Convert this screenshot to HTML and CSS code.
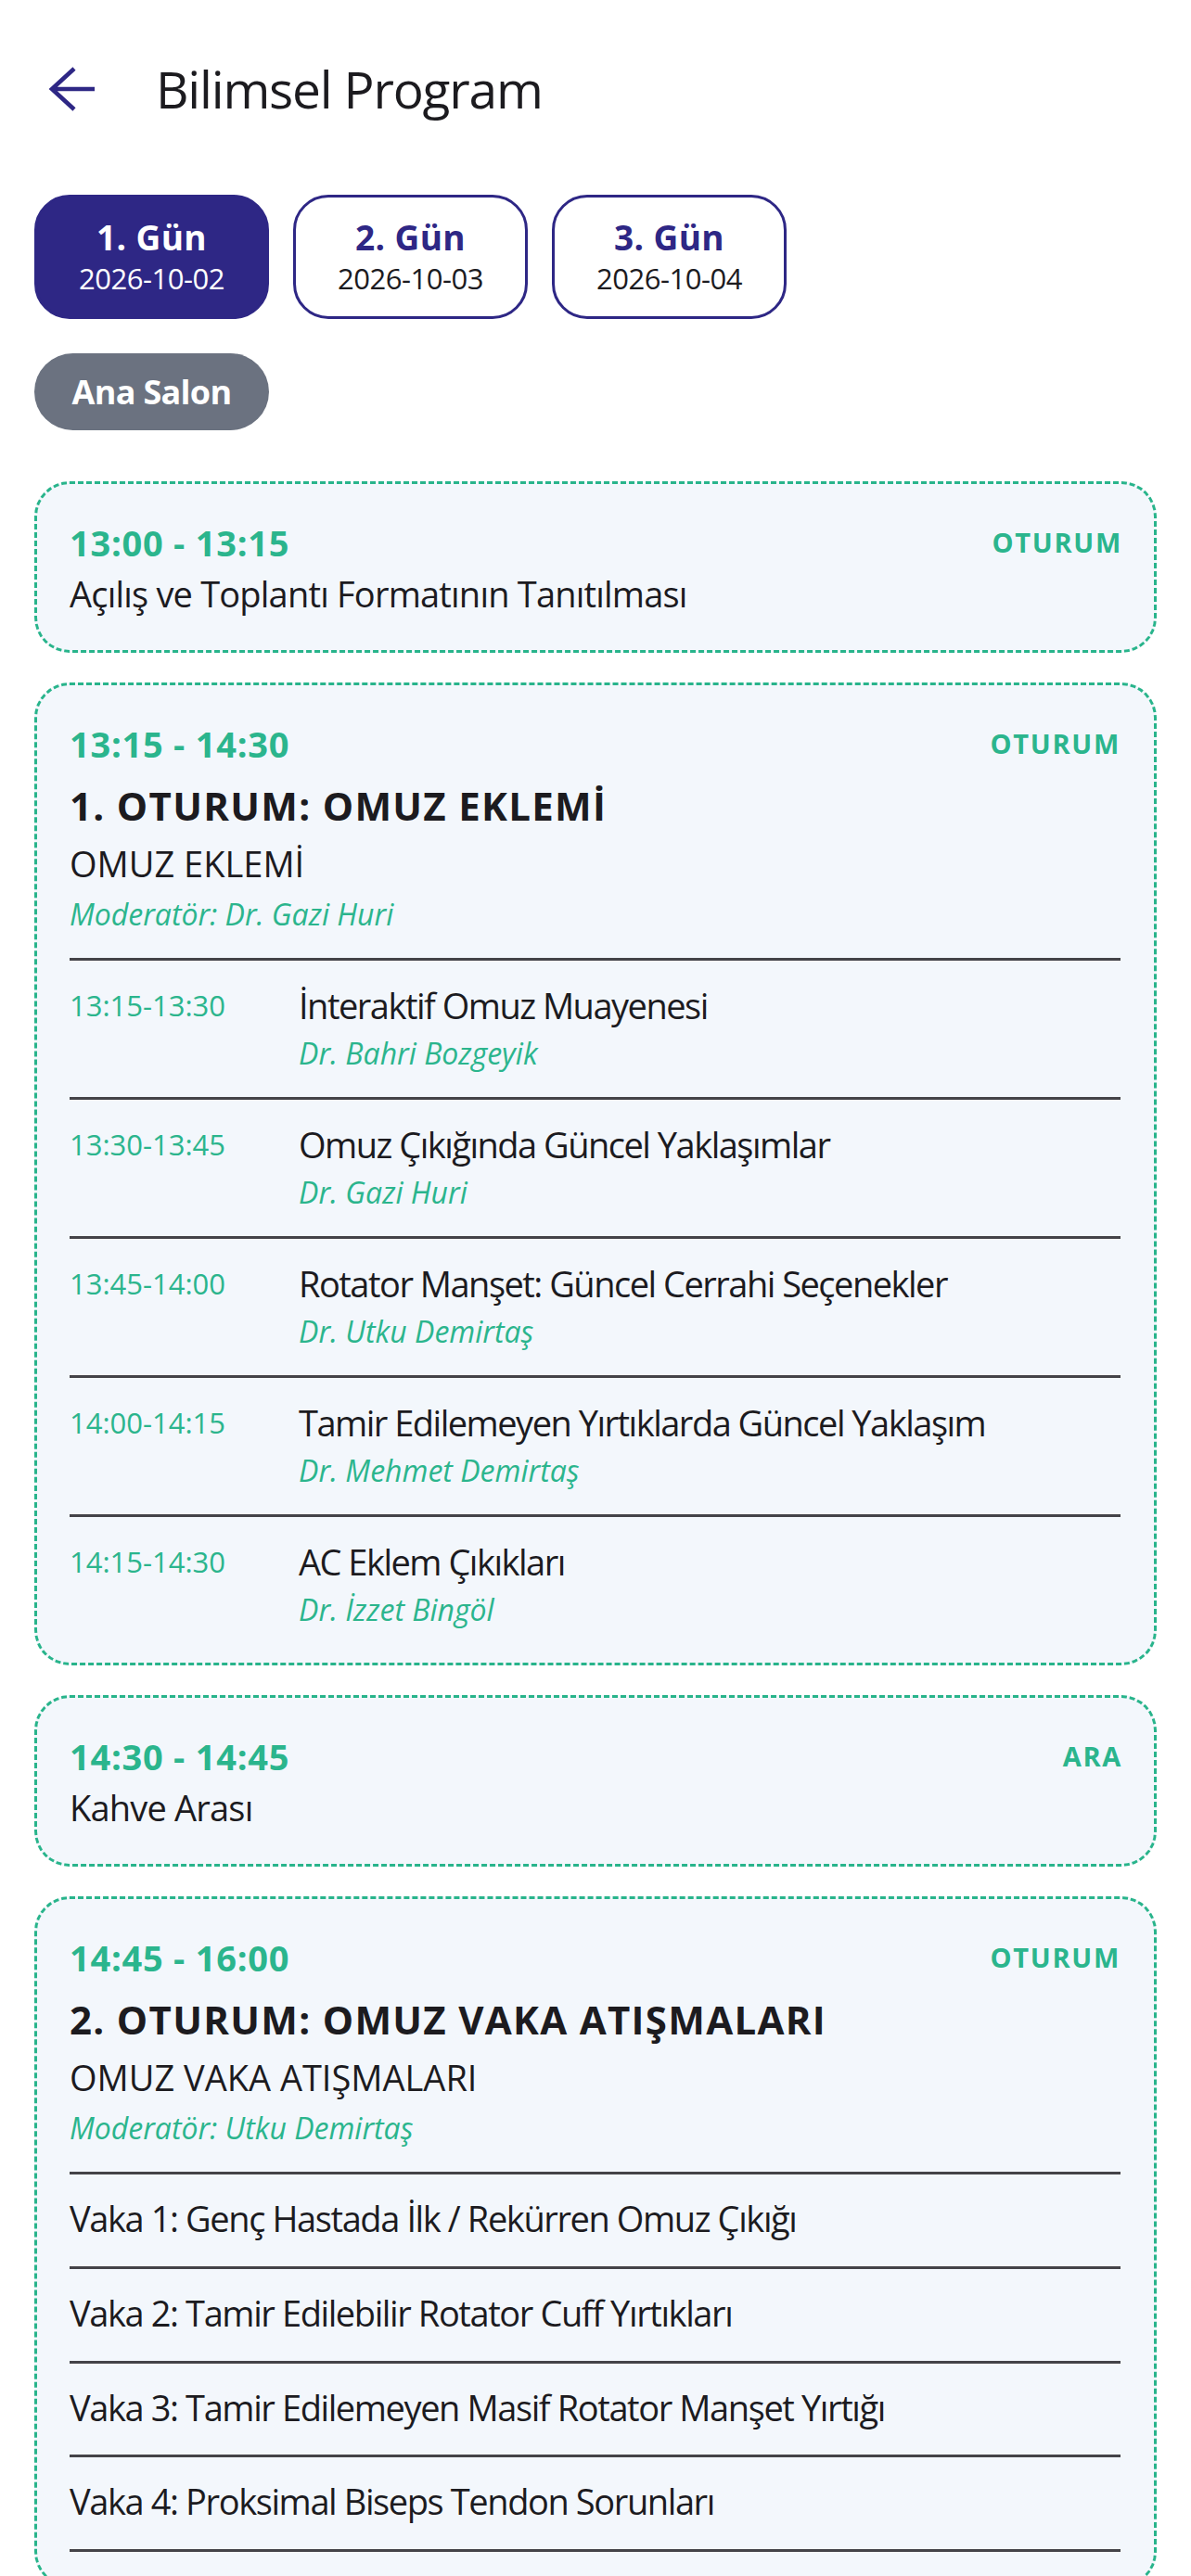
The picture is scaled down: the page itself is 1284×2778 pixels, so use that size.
FILE: index.html
```html
<!DOCTYPE html>
<html lang="tr">
<head>
<meta charset="utf-8">
<title>Bilimsel Program</title>
<link rel="stylesheet" href="styles.css">
</head>
<body>
<div class="page">
  <header class="header">
    <svg class="back" width="52" height="52" viewBox="0 0 52 52" aria-hidden="true">
      <path d="M50 26H4M28 4L4 26L28 48" fill="none" stroke="#2e2785" stroke-width="4.6"/>
    </svg>
    <h1 class="title">Bilimsel Program</h1>
  </header>

  <nav class="tabs">
    <div class="tab active"><span class="tab-day">1. Gün</span><span class="tab-date">2026-10-02</span></div>
    <div class="tab"><span class="tab-day">2. Gün</span><span class="tab-date">2026-10-03</span></div>
    <div class="tab"><span class="tab-day">3. Gün</span><span class="tab-date">2026-10-04</span></div>
  </nav>

  <div class="halls"><span class="chip">Ana Salon</span></div>

  <main class="list">
    <section class="card">
      <div class="card-head"><span class="time">13:00 - 13:15</span><span class="badge">OTURUM</span></div>
      <div class="sub">Açılış ve Toplantı Formatının Tanıtılması</div>
    </section>

    <section class="card">
      <div class="session-head">
        <div class="card-head"><span class="time">13:15 - 14:30</span><span class="badge">OTURUM</span></div>
        <div class="session-title">1. OTURUM: OMUZ EKLEMİ</div>
        <div class="sub sub-gap">OMUZ EKLEMİ</div>
        <div class="mod">Moderatör: Dr. Gazi Huri</div>
      </div>
      <div class="talks">
        <div class="talk"><span class="talk-time">13:15-13:30</span><div class="talk-body"><div class="talk-title">İnteraktif Omuz Muayenesi</div><div class="speaker">Dr. Bahri Bozgeyik</div></div></div>
        <div class="talk"><span class="talk-time">13:30-13:45</span><div class="talk-body"><div class="talk-title">Omuz Çıkığında Güncel Yaklaşımlar</div><div class="speaker">Dr. Gazi Huri</div></div></div>
        <div class="talk"><span class="talk-time">13:45-14:00</span><div class="talk-body"><div class="talk-title">Rotator Manşet: Güncel Cerrahi Seçenekler</div><div class="speaker">Dr. Utku Demirtaş</div></div></div>
        <div class="talk"><span class="talk-time">14:00-14:15</span><div class="talk-body"><div class="talk-title">Tamir Edilemeyen Yırtıklarda Güncel Yaklaşım</div><div class="speaker">Dr. Mehmet Demirtaş</div></div></div>
        <div class="talk"><span class="talk-time">14:15-14:30</span><div class="talk-body"><div class="talk-title">AC Eklem Çıkıkları</div><div class="speaker">Dr. İzzet Bingöl</div></div></div>
      </div>
    </section>

    <section class="card">
      <div class="card-head"><span class="time">14:30 - 14:45</span><span class="badge">ARA</span></div>
      <div class="sub">Kahve Arası</div>
    </section>

    <section class="card">
      <div class="session-head">
        <div class="card-head"><span class="time">14:45 - 16:00</span><span class="badge">OTURUM</span></div>
        <div class="session-title">2. OTURUM: OMUZ VAKA ATIŞMALARI</div>
        <div class="sub sub-gap">OMUZ VAKA ATIŞMALARI</div>
        <div class="mod">Moderatör: Utku Demirtaş</div>
      </div>
      <div class="cases">
        <div class="case">Vaka 1: Genç Hastada İlk / Rekürren Omuz Çıkığı</div>
        <div class="case">Vaka 2: Tamir Edilebilir Rotator Cuff Yırtıkları</div>
        <div class="case">Vaka 3: Tamir Edilemeyen Masif Rotator Manşet Yırtığı</div>
        <div class="case">Vaka 4: Proksimal Biseps Tendon Sorunları</div>
      </div>
    </section>
  </main>
</div>
</body>
</html>
```

FILE: styles.css
```css
* { box-sizing: border-box; }
html, body { margin: 0; padding: 0; background: #ffffff; }
body {
  font-family: "Open Sans", "Noto Sans", sans-serif;
  color: #1c1b1f;
}
.page { padding: 0 37px; }

.header {
  display: flex;
  align-items: center;
  padding-top: 64px;
  padding-left: 15px;
  height: 128px;
}
.back { flex: none; display: block; }
.title {
  margin: 0 0 0 64px;
  font-size: 55px;
  line-height: 64px;
  font-weight: 400;
  letter-spacing: -1.2px;
  color: #1c1b1f;
}

.tabs {
  display: flex;
  gap: 26px;
  margin-top: 82px;
}
.tab {
  width: 253px;
  height: 134px;
  border: 3px solid #2e2785;
  border-radius: 38px;
  background: #fff;
  display: flex;
  flex-direction: column;
  align-items: center;
  justify-content: center;
  gap: 2px;
}
.tab-day { font-size: 37px; line-height: 44px; font-weight: 700; color: #2e2785; letter-spacing: 0.4px; }
.tab-date { font-size: 31px; line-height: 40px; color: #1c1b1f; letter-spacing: -0.5px; }
.tab.active { background: #2e2785; }
.tab.active .tab-day, .tab.active .tab-date { color: #fff; }

.halls { margin-top: 37px; display: flex; }
.chip {
  width: 253px;
  height: 83px;
  border-radius: 42px;
  background: #6b7280;
  color: #fff;
  font-size: 36px;
  font-weight: 700;
  letter-spacing: -0.7px;
  display: flex;
  align-items: center;
  justify-content: center;
}

.list {
  margin-top: 55px;
  display: flex;
  flex-direction: column;
  gap: 32px;
}
.card {
  border: 3px dashed #28b48b;
  border-radius: 38px;
  background: #f3f7fc;
  padding: 37px 34px 35px 35px;
}
.card-head {
  display: flex;
  align-items: center;
  justify-content: space-between;
}
.time { font-size: 38px; line-height: 52px; font-weight: 700; color: #2bb58d; letter-spacing: 0.75px; }
.badge { font-size: 29px; line-height: 40px; font-weight: 700; color: #2bb58d; letter-spacing: 1.7px; }
.sub { font-size: 38px; line-height: 52px; margin-top: 3px; letter-spacing: -0.8px; }
.session-title { font-size: 42px; line-height: 56px; font-weight: 700; margin-top: 13px; letter-spacing: 1.3px; }
.sub.sub-gap { margin-top: 8px; letter-spacing: 0; }
.mod { font-size: 32px; line-height: 44px; font-style: italic; color: #2bb58d; margin-top: 7px; }
.session-head { padding-bottom: 25px; border-bottom: 3px solid #444348; margin-right: 2px; }

.talk {
  display: grid;
  grid-template-columns: 247px 1fr;
  padding: 25px 0 25px;
  margin-right: 2px;
}
.talk + .talk { border-top: 3px solid #444348; }
.talk:last-child { padding-bottom: 0; }
.talk-time { font-size: 31px; line-height: 46px; color: #2bb58d; }
.talk-title { font-size: 38px; line-height: 46px; letter-spacing: -1.5px; }
.speaker { font-size: 32px; line-height: 44px; font-style: italic; color: #2bb58d; margin-top: 7px; }

.case {
  font-size: 38px;
  line-height: 52px;
  padding: 21px 0 25.75px;
  letter-spacing: -1.4px;
  border-bottom: 3px solid #444348;
  margin-right: 2px;
}
```
